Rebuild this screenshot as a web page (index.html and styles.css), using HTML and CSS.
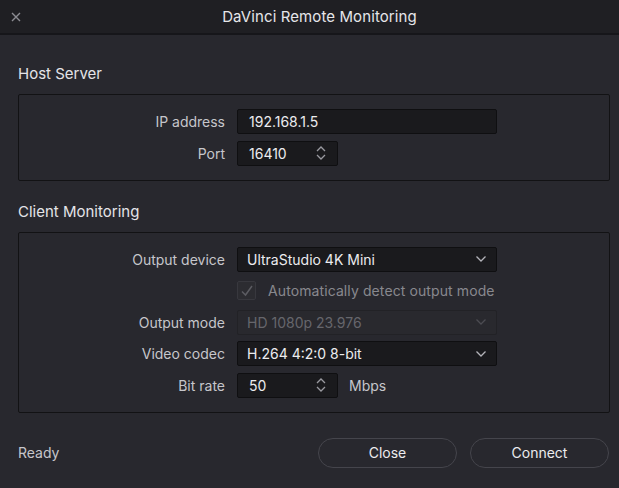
FILE: index.html
```html
<!DOCTYPE html>
<html>
<head>
    <title>DaVinci Remote Monitoring</title>
    <meta charset="utf-8">
    <meta name="viewport" content="width=device-width, initial-scale=1">
    <link rel="stylesheet" href="styles.css">
</head>

<body>
    <header class="titlebar">
        <span class="close-x">
            <svg width="10" height="10" viewBox="0 0 10 10"><path d="M1 1L9 9M9 1L1 9" stroke="#8c8c92" stroke-width="1.4" fill="none"/></svg>
        </span>
        <h1>DaVinci Remote Monitoring</h1>
    </header>

    <main>
        <h2 class="group-title first">Host Server</h2>
        <div class="group">
            <label class="label">IP address</label>
            <div class="field wide">192.168.1.5</div>

            <label class="label">Port</label>
            <div class="field spin">16410
                <svg class="arrows" width="12" height="16" viewBox="0 0 12 16"><path d="M2 6L6 2L10 6M2 10L6 14L10 10" stroke="#9a9aa0" stroke-width="1.3" fill="none"/></svg>
            </div>
        </div>

        <h2 class="group-title">Client Monitoring</h2>
        <div class="group">
            <label class="label">Output device</label>
            <div class="field wide select">UltraStudio 4K Mini
                <svg class="chev" width="12" height="8" viewBox="0 0 12 8"><path d="M1.5 1.5L6 6L10.5 1.5" stroke="#b4b4ba" stroke-width="1.3" fill="none"/></svg>
            </div>

            <span></span>
            <div class="check-row">
                <span class="checkbox">
                    <svg width="14" height="14" viewBox="0 0 14 14"><path d="M2 7.5L5.5 11L12 2" stroke="#5c5c62" stroke-width="1.5" fill="none"/></svg>
                </span>
                <span class="check-text">Automatically detect output mode</span>
            </div>

            <label class="label">Output mode</label>
            <div class="field wide select disabled">HD 1080p 23.976
                <svg class="chev" width="12" height="8" viewBox="0 0 12 8"><path d="M1.5 1.5L6 6L10.5 1.5" stroke="#4c4c52" stroke-width="1.3" fill="none"/></svg>
            </div>

            <label class="label">Video codec</label>
            <div class="field wide select">H.264 4:2:0 8-bit
                <svg class="chev" width="12" height="8" viewBox="0 0 12 8"><path d="M1.5 1.5L6 6L10.5 1.5" stroke="#b4b4ba" stroke-width="1.3" fill="none"/></svg>
            </div>

            <label class="label">Bit rate</label>
            <div class="unit-row">
                <div class="field spin">50
                    <svg class="arrows" width="12" height="16" viewBox="0 0 12 16"><path d="M2 6L6 2L10 6M2 10L6 14L10 10" stroke="#9a9aa0" stroke-width="1.3" fill="none"/></svg>
                </div>
                <span class="unit">Mbps</span>
            </div>
        </div>
    </main>

    <footer>
        <span class="status">Ready</span>
        <div class="buttons">
            <button class="btn">Close</button>
            <button class="btn">Connect</button>
        </div>
    </footer>
</body>
</html>
```

FILE: styles.css
```css
:root {
    --bg: #28282e;
    --titleBg: #1f1f23;
    --fieldBg: #1a1a1d;
    --border: #121214;
    --label: #c6c6cb;
    --text: #ececef;
}

body {
    margin: 0;
    background-color: var(--bg);
    font-family: Inter, "Noto Sans", sans-serif;
    font-size: 14px;
    color: var(--text);
}

.titlebar {
    height: 33px;
    padding-left: 20px;
    background-color: var(--titleBg);
    border-bottom: 2px solid #16161a;
    display: flex;
    align-items: center;
    justify-content: center;
    position: relative;
}
.titlebar h1 {
    margin: 0;
    font-size: 15px;
    font-weight: 400;
    letter-spacing: 0.1px;
    color: #e6e6ea;
}
.close-x {
    position: absolute;
    left: 11px;
    top: 12px;
    display: flex;
}

main {
    padding: 0 9px 0 18px;
}
.group-title {
    margin: 21px 0 10px 0;
    font-size: 15px;
    font-weight: 400;
    line-height: 20px;
    color: #e4e4e8;
}
.group-title.first {
    margin-top: 29px;
}

.group {
    border: 1px solid var(--border);
    border-radius: 2px;
    padding: 14px 0;
    display: grid;
    grid-template-columns: 206px 1fr;
    column-gap: 12px;
    row-gap: 6.5px;
    align-items: center;
}
.label {
    text-align: right;
    color: var(--label);
}

.field {
    box-sizing: border-box;
    height: 25px;
    background-color: var(--fieldBg);
    border: 1px solid #0f0f11;
    border-radius: 2px;
    padding: 0 11px;
    display: flex;
    align-items: center;
    justify-content: space-between;
    color: var(--text);
}
.field.wide {
    width: 260px;
}
.field.select {
    padding-left: 9px;
    padding-right: 9px;
}
.field.spin {
    width: 101px;
    padding-right: 10px;
}
.field.disabled {
    background-color: #29292e;
    border-color: #222226;
    color: #66666c;
}

.check-row {
    height: 25px;
    display: flex;
    align-items: center;
    gap: 12px;
}
.checkbox {
    box-sizing: border-box;
    width: 19px;
    height: 19px;
    border: 1px solid #38383e;
    border-radius: 2px;
    background-color: #2c2c31;
    display: flex;
    align-items: center;
    justify-content: center;
}
.check-text {
    color: #88888e;
    letter-spacing: 0.1px;
}

.unit-row {
    display: flex;
    align-items: center;
    gap: 11px;
}
.unit {
    color: var(--label);
}

footer {
    margin-top: 25px;
    padding: 0 10px 0 18px;
    display: flex;
    align-items: center;
    justify-content: space-between;
}
.status {
    color: var(--label);
}
.buttons {
    display: flex;
    gap: 13px;
}
.btn {
    width: 139px;
    height: 30px;
    border: 1.5px solid #45454c;
    border-radius: 15px;
    background-color: var(--bg);
    color: var(--text);
    font-family: Inter, "Noto Sans", sans-serif;
    font-size: 14px;
}
```
